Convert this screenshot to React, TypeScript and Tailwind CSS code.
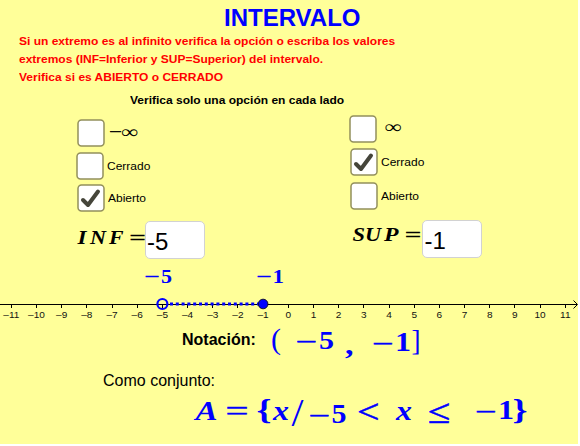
import React from "react";

type Glyph = {
  ch: string;
  x: number;
  y: number;
  size: number;
  w: number;
  kind?: "bold" | "italic" | "plain" | "sign";
};

const glyphStyle = {
  bold: "font-bold",
  italic: "font-bold italic",
  plain: "font-normal",
  sign: "font-normal stroke-current [stroke-width:0.5px]",
};

/* A typeset formula: each symbol sits on its own baseline. */
function Formula({ glyphs, width, height, className }: { glyphs: Glyph[]; width: number; height: number; className: string }) {
  return (
    <svg width={width} height={height} className={`block shrink-0 overflow-visible font-['Liberation_Serif',serif] ${className}`}>
      {glyphs.map((g, i) => (
        <text
          key={i}
          x={g.x}
          y={g.y}
          fontSize={g.size}
          textLength={g.w}
          lengthAdjust="spacingAndGlyphs"
          fill="currentColor"
          className={glyphStyle[g.kind ?? "bold"]}
        >
          {g.ch}
        </text>
      ))}
    </svg>
  );
}

function Check({ checked = false }: { checked?: boolean }) {
  return (
    <svg width="28" height="28" viewBox="0 0 28 28" className="block shrink-0">
      <rect x="1" y="1" width="26" height="26" rx="3.5" fill="#fff" stroke="#93905c" strokeWidth="1.5" />
      {checked && <path d="M6 16 L11 21 L21 7.5" fill="none" stroke="#45453a" strokeWidth="4" strokeLinecap="round" strokeLinejoin="round" />}
    </svg>
  );
}

function Axis() {
  const step = 25.18;
  const zero = 288.3;
  const ticks = Array.from({ length: 23 }, (_, i) => i - 11);
  return (
    <svg width="578" height="34" className="block font-['Liberation_Sans',sans-serif]">
      <path d="M0 14.5H577" stroke="#000" />
      <path d="M573.5 10.5L577.5 14.5L573.5 18.5" fill="none" stroke="#000" />
      {ticks.map((n) => (
        <g key={n}>
          <path d={`M${Math.floor(zero + n * step) + 0.5} 14V18`} stroke="#000" />
          <text x={(zero + n * step) / 1.06} y="28" fontSize="9.5" textAnchor="middle" fill="#111" transform="scale(1.06 1)">
            {n < 0 ? `–${-n}` : n}
          </text>
        </g>
      ))}
      <path d="M170 14H260" stroke="#00f" strokeWidth="3" strokeDasharray="3 2.8" />
      <circle cx="162.4" cy="14" r="5" fill="none" stroke="#00f" strokeWidth="2.2" />
      <circle cx="263.1" cy="14" r="4.8" fill="#00f" stroke="#111133" />
    </svg>
  );
}

const minusInfinity: Glyph[] = [
  { ch: "−", x: 0.3, y: 18, size: 16, w: 12.5, kind: "sign" },
  { ch: "∞", x: 12.5, y: 18.5, size: 18, w: 17 },
];
const infinity: Glyph[] = [{ ch: "∞", x: 0, y: 18, size: 18, w: 17 }];
const inf: Glyph[] = [
  { ch: "I", x: 1.5, y: 23, size: 19.5, w: 9, kind: "italic" },
  { ch: "N", x: 14, y: 23, size: 19.5, w: 16, kind: "italic" },
  { ch: "F", x: 33, y: 23, size: 19.5, w: 14.5, kind: "italic" },
  { ch: "=", x: 53.5, y: 23, size: 19, w: 16, kind: "sign" },
];
const sup: Glyph[] = [
  { ch: "S", x: 1.5, y: 20.5, size: 19.5, w: 12.5, kind: "italic" },
  { ch: "U", x: 14, y: 20.5, size: 19.5, w: 16, kind: "italic" },
  { ch: "P", x: 33, y: 20.5, size: 19.5, w: 14.5, kind: "italic" },
  { ch: "=", x: 54, y: 20.5, size: 19, w: 16, kind: "sign" },
];
const endpoints: Glyph[] = [
  { ch: "−", x: 144.5, y: 23.3, size: 19, w: 15, kind: "sign" },
  { ch: "5", x: 161, y: 22.5, size: 18.5, w: 11 },
  { ch: "−", x: 256.5, y: 23.3, size: 19, w: 15, kind: "sign" },
  { ch: "1", x: 272.5, y: 22.5, size: 18.5, w: 11.5 },
];
const notation: Glyph[] = [
  { ch: "(", x: 271, y: 27, size: 30, w: 10, kind: "plain" },
  { ch: "−", x: 295.5, y: 28, size: 25, w: 21.5, kind: "sign" },
  { ch: "5", x: 319, y: 26.5, size: 26, w: 15 },
  { ch: ",", x: 345, y: 32, size: 28, w: 8.5 },
  { ch: "−", x: 372, y: 30, size: 25, w: 21.5, kind: "sign" },
  { ch: "1", x: 395, y: 28.5, size: 26.5, w: 16 },
  { ch: "]", x: 411.5, y: 27.5, size: 30, w: 9, kind: "plain" },
];
const setGlyphs: Glyph[] = [
  { ch: "A", x: 195.5, y: 24.5, size: 28, w: 22, kind: "italic" },
  { ch: "=", x: 225.5, y: 25, size: 27, w: 23, kind: "sign" },
  { ch: "{", x: 256.5, y: 25, size: 30, w: 15 },
  { ch: "x", x: 273, y: 25, size: 28, w: 16, kind: "italic" },
  { ch: "/", x: 291.5, y: 31, size: 39, w: 12, kind: "plain" },
  { ch: "−", x: 308.5, y: 28.5, size: 25, w: 21.5, kind: "sign" },
  { ch: "5", x: 331.5, y: 27.5, size: 26.5, w: 15 },
  { ch: "<", x: 357, y: 28, size: 33, w: 22.5, kind: "sign" },
  { ch: "x", x: 396, y: 25, size: 28, w: 16, kind: "italic" },
  { ch: "≤", x: 428, y: 28, size: 34, w: 22.5, kind: "sign" },
  { ch: "−", x: 475, y: 24.7, size: 25, w: 21.5, kind: "sign" },
  { ch: "1", x: 498, y: 23.5, size: 26.5, w: 16 },
  { ch: "}", x: 512.5, y: 25, size: 30, w: 15 },
];

function ValueBox({ value }: { value: string }) {
  return (
    <div className="flex h-[38px] w-[60px] shrink-0 items-center rounded-[5px] border-[1.5px] border-[#d2d2d2] bg-white pl-[1.5px] pt-[3px] text-2xl leading-none text-black">
      {value}
    </div>
  );
}

export default function App() {
  return (
    <div className="h-[446px] w-[580px] overflow-hidden bg-white font-['Liberation_Sans',sans-serif] text-black">
      <div className="flex h-[444px] w-[578px] flex-col overflow-hidden bg-[#ffff99]">
        <h1 className="h-8 shrink-0 pl-[224px] pt-[5px] text-2xl font-bold leading-[26px] text-[#00f]">INTERVALO</h1>
        <div className="ml-[19px] h-[59px] shrink-0 origin-left scale-x-[1.091] self-start whitespace-nowrap text-[11px] font-bold leading-[18px] text-[#f00]">
          <p>Si un extremo es al infinito verifica la opción o escriba los valores</p>
          <p>extremos (INF=Inferior y SUP=Superior) del intervalo.</p>
          <p>Verifica si es ABIERTO o CERRADO</p>
        </div>
        <p className="ml-[130px] h-6 shrink-0 origin-left scale-x-[1.091] self-start whitespace-nowrap text-[11px] font-bold leading-[18px]">
          Verifica solo una opción en cada lado
        </p>

        <div className="flex h-[147px] shrink-0 text-[11px]">
          <div className="w-[273px] pl-[76px] pt-1">
            <div className="flex h-[33px] pl-px">
              <Check />
              <Formula glyphs={minusInfinity} width={34} height={28} className="ml-1 text-black" />
            </div>
            <div className="flex h-8 gap-[3px]">
              <Check />
              <span className="origin-left scale-x-[1.091] leading-7">Cerrado</span>
            </div>
            <div className="flex h-[37px] gap-[3px] pl-px">
              <Check checked />
              <span className="origin-left scale-x-[1.091] leading-7">Abierto</span>
            </div>
            <div className="flex">
              <Formula glyphs={inf} width={68.5} height={38} className="text-black" />
              <ValueBox value="-5" />
            </div>
          </div>
          <div className="w-[305px] pl-[76px]">
            <div className="flex h-[33px]">
              <Check />
              <Formula glyphs={infinity} width={34} height={28} className="ml-2 text-black" />
            </div>
            <div className="flex h-[34px] gap-[3px] pl-px">
              <Check checked />
              <span className="origin-left scale-x-[1.091] leading-7">Cerrado</span>
            </div>
            <div className="flex h-[38px] gap-[3px] pl-px">
              <Check />
              <span className="origin-left scale-x-[1.091] leading-7">Abierto</span>
            </div>
            <div className="flex pl-[2px]">
              <Formula glyphs={sup} width={71} height={38} className="text-black" />
              <ValueBox value="-1" />
            </div>
          </div>
        </div>

        <div className="-mt-[2px] h-7 shrink-0">
          <Formula glyphs={endpoints} width={578} height={28} className="text-[#00f]" />
        </div>
        <div className="mt-[2px] h-8 shrink-0">
          <Axis />
        </div>
        <div className="flex h-[50px] shrink-0">
          <span className="w-[271px] shrink-0 pl-[182px] pt-[9px] text-base font-bold leading-[18px]">Notación:</span>
          <Formula glyphs={notation.map((g) => ({ ...g, x: g.x - 271 }))} width={160} height={40} className="text-[#00f]" />
        </div>
        <p className="h-[23px] shrink-0 pl-[103px] text-base leading-[18px]">Como conjunto:</p>
        <Formula glyphs={setGlyphs} width={578} height={40} className="text-[#00f]" />
      </div>
    </div>
  );
}
